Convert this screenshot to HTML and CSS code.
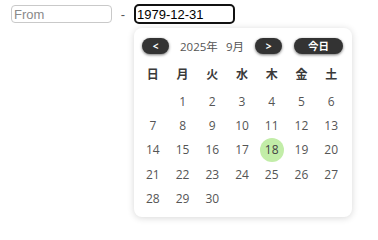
FILE: index.html
```html
<!DOCTYPE html>
<html lang="ja">
<head>
<meta charset="utf-8">
<link rel="stylesheet" href="styles.css">
</head>
<body>
<div class="range">
  <input class="field field-from" type="text" placeholder="From">
  <span class="dash">-</span>
  <input class="field field-to" type="text" value="1979-12-31">
</div>
<div class="picker">
  <div class="head">
    <button class="btn btn-nav">&lt;</button>
    <span class="ym"><span class="year">2025年</span><span class="month">9月</span></span>
    <button class="btn btn-nav">&gt;</button>
    <button class="btn btn-today">今日</button>
  </div>
  <div class="grid">
    <div class="wd">日</div><div class="wd">月</div><div class="wd">火</div><div class="wd">水</div><div class="wd">木</div><div class="wd">金</div><div class="wd">土</div>
  </div>
  <div class="grid days">
    <div></div><div class="d">1</div><div class="d">2</div><div class="d">3</div><div class="d">4</div><div class="d">5</div><div class="d">6</div>
    <div class="d">7</div><div class="d">8</div><div class="d">9</div><div class="d">10</div><div class="d">11</div><div class="d">12</div><div class="d">13</div>
    <div class="d">14</div><div class="d">15</div><div class="d">16</div><div class="d">17</div><div class="d"><span class="today">18</span></div><div class="d">19</div><div class="d">20</div>
    <div class="d">21</div><div class="d">22</div><div class="d">23</div><div class="d">24</div><div class="d">25</div><div class="d">26</div><div class="d">27</div>
    <div class="d">28</div><div class="d">29</div><div class="d">30</div>
  </div>
</div>
</body>
</html>
```
FILE: styles.css
```css
* { box-sizing: border-box; }
html, body { margin: 0; padding: 0; background: #fff; }
body {
  font-family: "Open Sans", "Noto Sans CJK JP", sans-serif;
  width: 378px;
  height: 236px;
  overflow: hidden;
}
.range {
  display: flex;
  align-items: center;
  padding: 4px 0 0 11px;
  height: 24px;
}
.field {
  font-family: "Liberation Sans", Arial, sans-serif;
  font-size: 13px;
  color: #000;
  padding: 0 2px;
  margin: 0;
  outline: none;
  background: #fff;
}
.field-from {
  width: 101px;
  height: 18px;
  border: 1px solid #c9c9c9;
  border-radius: 4px;
}
.field-from::placeholder { color: #8a8a8a; }
.field-to {
  width: 101px;
  height: 20px;
  border: 2px solid #111;
  border-radius: 5px;
  padding: 0 1px;
}
.dash {
  font-family: "Liberation Sans", Arial, sans-serif;
  font-size: 13px;
  color: #555;
  width: 22px;
  text-align: center;
}
.picker {
  margin: 4px 0 0 134px;
  width: 218px;
  height: 189px;
  background: #fff;
  border-radius: 8px;
  box-shadow: 0 1px 7px rgba(0, 0, 0, 0.16);
  padding: 10px 0 0 4px;
}
.head {
  display: flex;
  align-items: center;
  height: 15px;
  padding-left: 4px;
}
.btn {
  font-family: "Open Sans", "Noto Sans CJK JP", sans-serif;
  border: none;
  background: #333;
  color: #fff;
  font-weight: 700;
  border-radius: 8px;
  height: 16px;
  padding: 0;
  line-height: 16px;
  box-shadow: 0 1px 3px rgba(0, 0, 0, 0.55);
}
.btn-nav { width: 27px; font-size: 10px; }
.btn-today { width: 49px; font-size: 10.5px; margin-left: 12px; }
.ym {
  display: flex;
  width: 86px;
  padding-left: 11px;
  font-size: 11.5px;
  color: #555;
}
.year { width: 46px; }
.grid {
  display: grid;
  grid-template-columns: repeat(7, 1fr);
  width: 208px;
}
.wd {
  height: 24px;
  margin-top: 8px;
  display: flex;
  align-items: center;
  justify-content: center;
  font-size: 12px;
  font-weight: 700;
  color: #3a3a3a;
  font-family: "Noto Sans CJK JP", sans-serif;
}
.days {
  margin-top: 4px;
  grid-auto-rows: 24.4px;
}
.d {
  display: flex;
  align-items: center;
  justify-content: center;
  font-size: 12px;
  color: #555;
}
.today {
  width: 24px;
  height: 24px;
  border-radius: 50%;
  background: #c2eda8;
  display: flex;
  align-items: center;
  justify-content: center;
  color: #444;
}
```
